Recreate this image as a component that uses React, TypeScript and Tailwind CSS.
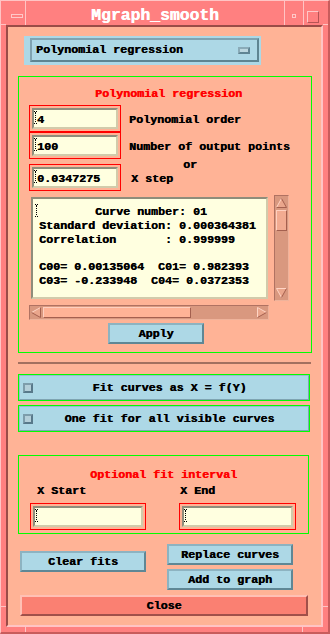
import React from "react";

const FONT = "font-['Liberation_Mono',monospace] font-bold [text-shadow:0.45px_0_0_currentColor]";

function ICursor({ className = "" }: { className?: string }) {
  const dots: React.ReactNode[] = [];
  for (let y = 2; y < 12; y += 2) dots.push(<rect key={y} x="1" y={y} width="1" height="1" fill="#000" />);
  return (
    <svg width="3" height="13" viewBox="0 0 3 13" className={className}>
      <rect x="0" y="0" width="1" height="1" fill="#000" />
      <rect x="2" y="0" width="1" height="1" fill="#000" />
      <rect x="1" y="1" width="1" height="1" fill="#000" />
      {dots}
      <rect x="0" y="12" width="1" height="1" fill="#000" />
      <rect x="2" y="12" width="1" height="1" fill="#000" />
    </svg>
  );
}

function Field({ value, className }: { value: string; className: string }) {
  return (
    <div className={`border border-[#ff0000] p-[2px] h-[27px] ${className}`}>
      <div className="h-[21px] border-2 border-t-[#8f8d7b] border-l-[#8f8d7b] border-b-[#d2cbab] border-r-[#d2cbab] bg-[#ffffe0] relative">
        <ICursor className="absolute left-0 top-[1px]" />
        <div className="pl-[3px] pt-[4px] leading-[13px] whitespace-pre">{value || "\u00a0"}</div>
      </div>
    </div>
  );
}

function BlueBtn({ label, className }: { label: string; className: string }) {
  return (
    <div
      className={`bg-[#add8e6] border-2 border-t-[#8db3c1] border-l-[#8db3c1] border-b-[#5f8795] border-r-[#5f8795] flex items-center justify-center leading-[14px] ${className}`}
    >
      {label}
    </div>
  );
}

function Toggle({ label, className }: { label: string; className: string }) {
  return (
    <div className={`ml-[10px] w-[292px] h-[27px] border border-[#00ff00] flex ${className}`}>
      <div className="flex-1 bg-[#add8e6] border border-t-[#98bccb] border-l-[#98bccb] border-b-[#7fa4b2] border-r-[#7fa4b2] flex items-center">
        <div className="ml-[3px] w-[10px] h-[10px] border-2 border-t-[#7d9dab] border-l-[#7d9dab] border-b-[#58798a] border-r-[#58798a] bg-[#b4cfd9]" />
        <div className="flex-1 text-center leading-[14px] pr-[2px]">{label}</div>
      </div>
    </div>
  );
}

const LIGHT = "#ffd4c4";
const DARK = "#a4604f";

function ArrowUp() {
  return (
    <svg width="11" height="10" viewBox="0 0 11 10">
      <polygon points="5.5,0.5 0.5,9.5 10.5,9.5" fill="#eaa68c" />
      <line x1="5.5" y1="0.5" x2="0.5" y2="9.5" stroke={LIGHT} />
      <line x1="5.5" y1="0.5" x2="10.5" y2="9.5" stroke={DARK} />
      <line x1="0.5" y1="9.5" x2="10.5" y2="9.5" stroke={DARK} />
    </svg>
  );
}
function ArrowDown() {
  return (
    <svg width="11" height="10" viewBox="0 0 11 10">
      <polygon points="0.5,0.5 10.5,0.5 5.5,9.5" fill="#eaa68c" />
      <line x1="0.5" y1="0.5" x2="10.5" y2="0.5" stroke={LIGHT} />
      <line x1="0.5" y1="0.5" x2="5.5" y2="9.5" stroke={LIGHT} />
      <line x1="10.5" y1="0.5" x2="5.5" y2="9.5" stroke={DARK} />
    </svg>
  );
}
function ArrowLeft() {
  return (
    <svg width="10" height="11" viewBox="0 0 10 11">
      <polygon points="0.5,5.5 9.5,0.5 9.5,10.5" fill="#eaa68c" />
      <line x1="0.5" y1="5.5" x2="9.5" y2="0.5" stroke={LIGHT} />
      <line x1="0.5" y1="5.5" x2="9.5" y2="10.5" stroke={DARK} />
      <line x1="9.5" y1="0.5" x2="9.5" y2="10.5" stroke={DARK} />
    </svg>
  );
}
function ArrowRight() {
  return (
    <svg width="10" height="11" viewBox="0 0 10 11">
      <polygon points="9.5,5.5 0.5,0.5 0.5,10.5" fill="#eaa68c" />
      <line x1="0.5" y1="0.5" x2="9.5" y2="5.5" stroke={LIGHT} />
      <line x1="0.5" y1="0.5" x2="0.5" y2="10.5" stroke={LIGHT} />
      <line x1="0.5" y1="10.5" x2="9.5" y2="5.5" stroke={DARK} />
    </svg>
  );
}

const RESULT = [
  "        Curve number: 01",
  "Standard deviation: 0.000364381",
  "Correlation       : 0.999999",
  "",
  "C00= 0.00135064  C01= 0.982393",
  "C03= -0.233948  C04= 0.0372353",
].join("\n");

export default function App() {
  return (
    <div
      className={`${FONT} text-[11.67px] text-black w-[330px] h-[634px] bg-[#ff8080] border-t border-l border-t-[#ffc4c4] border-l-[#ffc4c4] border-r-2 border-b-2 border-r-[#c85c5c] border-b-[#c85c5c] flex flex-col px-[5px] pb-[5px] relative`}
    >
      {/* frame corner markers */}
      <span className="absolute left-0 top-[23px] w-[5px] h-px bg-[#ffc4c4]" />
      <span className="absolute right-0 top-[23px] w-[5px] h-px bg-[#ffc4c4]" />
      <span className="absolute left-0 bottom-[25px] w-[5px] h-px bg-[#ffc4c4]" />
      <span className="absolute right-0 bottom-[25px] w-[5px] h-px bg-[#ffc4c4]" />
      <span className="absolute left-[24px] bottom-0 w-px h-[5px] bg-[#ffc4c4]" />
      <span className="absolute right-[25px] bottom-0 w-px h-[5px] bg-[#ffc4c4]" />

      {/* title bar */}
      <div className="h-[24px] flex shrink-0">
        <div className="w-[19px] pt-[13px] pl-[5px]">
          <div className="w-[12px] h-[4px] border border-[#ffc8c8]" />
        </div>
        <div className="w-px bg-[#ffc4c4]" />
        <div className="w-[258px] text-center text-white text-[16.4px] leading-[16.4px] pt-[7px]">
          Mgraph_smooth
        </div>
        <div className="w-px bg-[#ffc4c4]" />
        <div className="w-[18px] pt-[13px] pl-[7px]">
          <div className="w-[4px] h-[4px] border border-[#ffc8c8]" />
        </div>
        <div className="w-px bg-[#ffc4c4]" />
        <div className="flex-1 pt-[10px] pl-[3px]">
          <div className="w-[12px] h-[12px] border border-t-[#ffc8c8] border-l-[#ffc8c8] border-b-[#b45454] border-r-[#b45454]" />
        </div>
      </div>

      {/* client area */}
      <div className="flex-1 bg-[#ffb396] border-2 border-t-[#9a4c48] border-l-[#9a4c48] border-b-[#ffc4c4] border-r-[#ffc4c4] flex flex-col">
        {/* option menu */}
        <div className="ml-[16px] mt-[9px] w-[237px] h-[29px] bg-[#add8e6] pl-[6px] pr-[2px] pt-[2px] pb-[3px] flex">
          <div className="flex-1 border-2 border-t-[#7fa3b1] border-l-[#7fa3b1] border-b-[#5e8592] border-r-[#5e8592] flex items-center justify-between pl-[4px] pr-[7px]">
            <span className="leading-[14px]">Polynomial regression</span>
            <div className="w-[12px] h-[7px] border-2 border-t-[#8aabb8] border-l-[#8aabb8] border-b-[#5f8493] border-r-[#5f8493] bg-[#bcd7e0]" />
          </div>
        </div>

        {/* polynomial regression frame */}
        <div className="ml-[10px] mt-[11px] w-[294px] h-[277px] border border-[#00ff00] flex flex-col shrink-0">
          <div className="mt-[10px] leading-[14px] text-[#ff0000] text-center pl-[7px]">Polynomial regression</div>
          <div className="pl-[10px] mt-[4px] flex flex-col">
            <div className="flex items-baseline">
              <Field value="4" className="w-[92px]" />
              <span className="ml-[8px]">Polynomial order</span>
            </div>
            <div className="flex items-baseline">
              <Field value="100" className="w-[92px]" />
              <span className="ml-[8px]">Number of output points</span>
            </div>
            <div className="h-[5px]">
              <div className="pl-[154px] leading-[12px]">or</div>
            </div>
            <div className="flex items-baseline">
              <Field value="0.0347275" className="w-[92px]" />
              <span className="ml-[10px]">X step</span>
            </div>

            {/* scrolled text */}
            <div className="mt-[4px] flex h-[106px]">
              <div className="w-[241px] p-[2px]">
                <div className="h-full border-2 border-t-[#8f8d7b] border-l-[#8f8d7b] border-b-[#d2cbab] border-r-[#d2cbab] bg-[#ffffe0] relative overflow-hidden">
                  <ICursor className="absolute left-[2px] top-[5px]" />
                  <div className="pl-[6px] pt-[7px] leading-[13.8px] whitespace-pre">{RESULT}</div>
                </div>
              </div>
              <div className="ml-[4px] w-[15px] bg-[#d9987f] border border-t-[#b07262] border-l-[#b07262] border-b-[#efb39b] border-r-[#efb39b] flex flex-col items-center">
                <div className="mt-[2px]">
                  <ArrowUp />
                </div>
                <div className="mt-[2px] w-[11px] h-[21px] bg-[#f2ab91] border border-t-[#ffd0c0] border-l-[#ffd0c0] border-b-[#a4604f] border-r-[#a4604f]" />
                <div className="mt-auto mb-[2px]">
                  <ArrowDown />
                </div>
              </div>
            </div>
            <div className="mt-[4px] w-[240px] h-[15px] bg-[#d9987f] border border-t-[#b07262] border-l-[#b07262] border-b-[#efb39b] border-r-[#efb39b] flex items-center">
              <div className="ml-[1px]">
                <ArrowLeft />
              </div>
              <div className="ml-[2px] w-[148px] h-[11px] bg-[#ffb396] border border-t-[#ffd0c0] border-l-[#ffd0c0] border-b-[#a4604f] border-r-[#a4604f]" />
              <div className="ml-auto mr-[1px]">
                <ArrowRight />
              </div>
            </div>

            <BlueBtn label="Apply" className="mt-[3px] ml-[79px] w-[96px] h-[21px]" />
          </div>
        </div>

        {/* separator */}
        <div className="mt-[9px] ml-[10px] w-[293px] h-[2px] bg-[#a3705f]" />

        <Toggle label="Fit curves as X = f(Y)" className="mt-[10px]" />
        <Toggle label="One fit for all visible curves" className="mt-[4px]" />

        {/* optional fit interval */}
        <div className="ml-[10px] mt-[23px] w-[291px] h-[79px] border border-[#00ff00] flex flex-col shrink-0">
          <div className="mt-[12px] leading-[14px] text-[#ff0000] text-center">Optional fit interval</div>
          <div className="mt-[2px] flex">
            <div className="ml-[11px] w-[116px] flex flex-col">
              <div className="pl-[7px] leading-[14px]">X Start</div>
              <Field value="" className="mt-[5px] w-[116px]" />
            </div>
            <div className="ml-[33px] w-[117px] flex flex-col">
              <div className="pl-[1px] leading-[14px]">X End</div>
              <Field value="" className="mt-[5px] w-[117px]" />
            </div>
          </div>
        </div>

        {/* action buttons */}
        <div className="mt-[10px] flex">
          <BlueBtn label="Clear fits" className="ml-[12px] mt-[7px] w-[126px] h-[21px]" />
          <div className="ml-[21px] flex flex-col gap-[4px]">
            <BlueBtn label="Replace curves" className="w-[126px] h-[21px]" />
            <BlueBtn label="Add to graph" className="w-[126px] h-[21px]" />
          </div>
        </div>

        <div className="mt-[5px] ml-[12px] w-[288px] h-[21px] bg-[#fa8072] border-2 border-t-[#ffc0b4] border-l-[#ffc0b4] border-b-[#a0504a] border-r-[#a0504a] flex items-center justify-center leading-[14px]">
          Close
        </div>
      </div>
    </div>
  );
}
